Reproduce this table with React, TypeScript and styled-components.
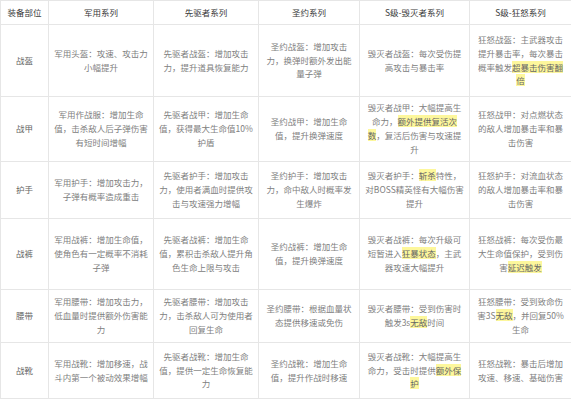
import React from "react";
import styled, { createGlobalStyle } from "styled-components";

const Global = createGlobalStyle`
  html, body { margin: 0; padding: 0; background: #fff; }
  body { font-family: "Noto Sans CJK SC", "Noto Sans", sans-serif; }
`;

const Table = styled.table`
  width: 571px;
  border-collapse: collapse;
  table-layout: fixed;
  font-size: 8.5px;
  line-height: 13.8px;
  color: #808080;
  text-spacing-trim: space-all;
`;

const HeadCell = styled.th`
  border: 1px solid #e6e6e6;
  font-size: 8.5px;
  font-weight: normal;
  color: #3a3a3a;
  padding: 0 2px;
  text-align: center;
  vertical-align: middle;
  white-space: nowrap;
`;

const Row = styled.tr<{ $h: number }>`
  height: ${(p) => p.$h}px;
`;

const Cell = styled.td`
  border: 1px solid #e6e6e6;
  padding: 0 2px;
  text-align: center;
  vertical-align: middle;
`;

const PartCell = styled(Cell)`
  color: #666;
`;

const Line = styled.span`
  display: block;
  white-space: nowrap;
`;

const Mark = styled.span`
  background: #fdf79c;
  color: #666;
`;

const cols = [48, 105, 105, 101, 110, 102];
const headers = ["装备部位", "军用系列", "先驱者系列", "圣约系列", "S级-毁灭者系列", "S级-狂怒系列"];

const rows: { part: string; h: number; cells: string[][] }[] = [
  {
    part: "战盔",
    h: 72,
    cells: [
      ["军用头盔：攻速、攻击力", "小幅提升"],
      ["先驱者战盔：增加攻击", "力，提升道具恢复能力"],
      ["圣约战盔：增加攻击", "力，换弹时额外发出能", "量子弹"],
      ["毁灭者战盔：每次受伤提", "高攻击与暴击率"],
      ["狂怒战盔：主武器攻击", "提升暴击率，每次暴击", "概率触发[超暴击伤害翻]", "[倍]"],
    ],
  },
  {
    part: "战甲",
    h: 65,
    cells: [
      ["军用作战服：增加生命", "值，击杀敌人后子弹伤害", "有短时间增幅"],
      ["先驱者战甲：增加生命", "值，获得最大生命值10%", "护盾"],
      ["圣约战甲：增加生命", "值，提升换弹速度"],
      ["毁灭者战甲：大幅提高生", "命力，[额外提供复活次]", "[数]，复活后伤害与攻速提", "升"],
      ["狂怒战甲：对点燃状态", "的敌人增加暴击率和暴", "击伤害"],
    ],
  },
  {
    part: "护手",
    h: 57,
    cells: [
      ["军用护手：增加攻击力，", "子弹有概率造成重击"],
      ["先驱者护手：增加攻击", "力，使用者满血时提供攻", "击与攻速强力增幅"],
      ["圣约护手：增加攻击", "力，命中敌人时概率发", "生爆炸"],
      ["毁灭者护手：[斩杀]特性，", "对BOSS精英怪有大幅伤害", "提升"],
      ["狂怒护手：对流血状态", "的敌人增加暴击率和暴", "击伤害"],
    ],
  },
  {
    part: "战裤",
    h: 71,
    cells: [
      ["军用战裤：增加生命值，", "使角色有一定概率不消耗", "子弹"],
      ["先驱者战裤：增加生命", "值，累积击杀敌人提升角", "色生命上限与攻击"],
      ["圣约战裤：增加生命", "值，提升换弹速度"],
      ["毁灭者战裤：每次升级可", "短暂进入[狂暴状态]，主武", "器攻速大幅提升"],
      ["狂怒战裤：每次受伤最", "大生命值保护，受到伤", "害[延迟触发]"],
    ],
  },
  {
    part: "腰带",
    h: 53,
    cells: [
      ["军用腰带：增加攻击力，", "低血量时提供额外伤害能", "力"],
      ["先驱者腰带：增加攻击", "力，击杀敌人可为使用者", "回复生命"],
      ["圣约腰带：根据血量状", "态提供移速或免伤"],
      ["毁灭者腰带：受到伤害时", "触发3s[无敌]时间"],
      ["狂怒腰带：受到致命伤", "害3S[无敌]，并回复50%", "生命"],
    ],
  },
  {
    part: "战靴",
    h: 56,
    cells: [
      ["军用战靴：增加移速，战", "斗内第一个被动效果增幅"],
      ["先驱者战靴：增加生命", "值，提供一定生命恢复能", "力"],
      ["圣约战靴：增加生命", "值，提升作战时移速"],
      ["毁灭者战靴：大幅提高生", "命力，受击时提供[额外保]", "[护]"],
      ["狂怒战靴：暴击后增加", "攻速、移速、基础伤害"],
    ],
  },
];

const HeadRow = styled.tr`
  height: 24px;
`;

function renderLine(text: string) {
  return text
    .split(/(\[[^\]]*\])/)
    .filter(Boolean)
    .map((part, i) =>
      part.startsWith("[") ? <Mark key={i}>{part.slice(1, -1)}</Mark> : <React.Fragment key={i}>{part}</React.Fragment>
    );
}

export default function App() {
  return (
    <>
      <Global />
      <Table>
        <colgroup>
          {cols.map((w, i) => (
            <col key={i} style={{ width: w }} />
          ))}
        </colgroup>
        <thead>
          <HeadRow>
            {headers.map((h) => (
              <HeadCell key={h}>{h}</HeadCell>
            ))}
          </HeadRow>
        </thead>
        <tbody>
          {rows.map((r) => (
            <Row key={r.part} $h={r.h}>
              <PartCell>{r.part}</PartCell>
              {r.cells.map((lines, i) => (
                <Cell key={i}>
                  {lines.map((l, j) => (
                    <Line key={j}>{renderLine(l)}</Line>
                  ))}
                </Cell>
              ))}
            </Row>
          ))}
        </tbody>
      </Table>
    </>
  );
}
